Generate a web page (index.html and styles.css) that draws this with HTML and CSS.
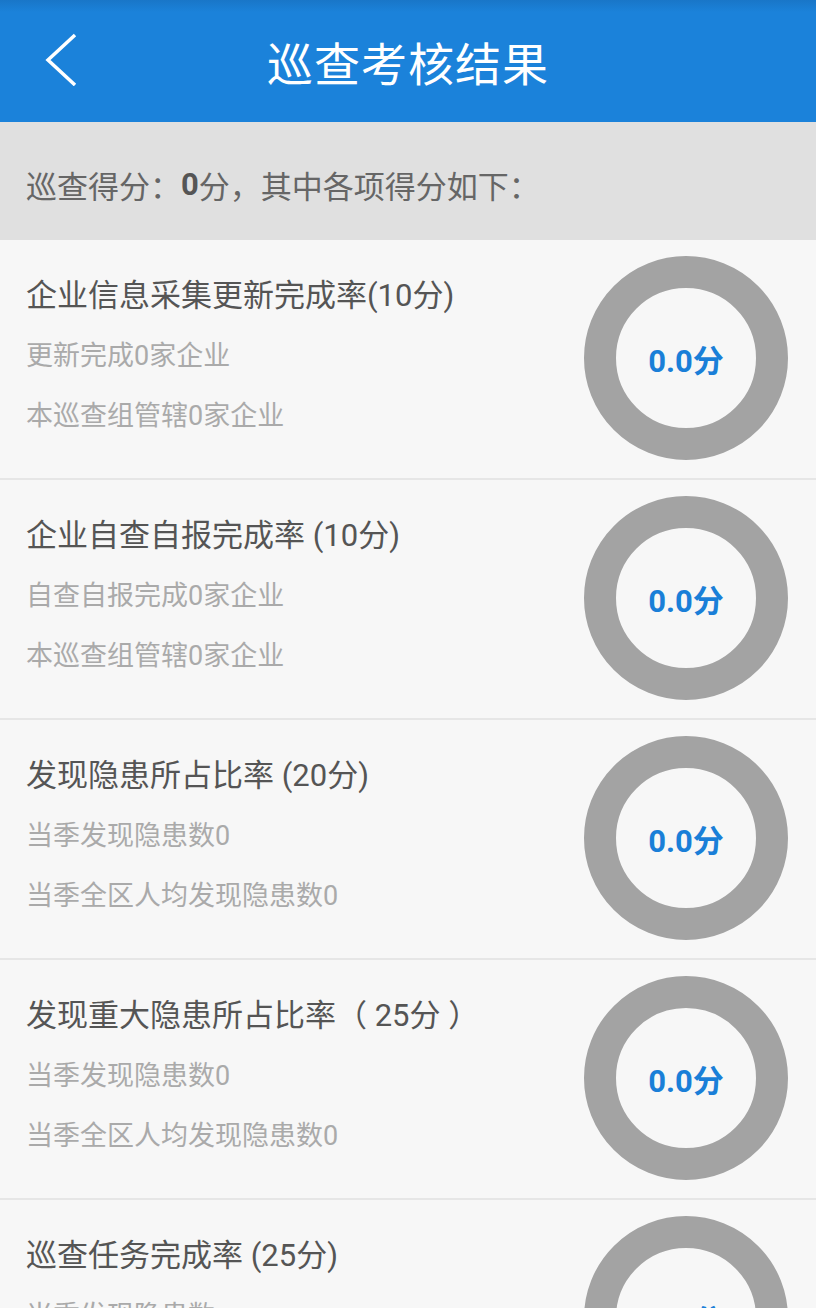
FILE: index.html
```html
<html>
  <head>
    <meta charset="utf-8" />
    <link rel="stylesheet" href="styles.css">
  </head>
  <body>
    <div class="header">
      <svg class="back" width="40" height="60" viewBox="0 0 40 60">
        <polyline points="30,9 3,34 30,59" fill="none" stroke="#fff" stroke-width="3.5" />
      </svg>
      <h1>巡查考核结果</h1>
    </div>

    <div class="summary">巡查得分：<b>0</b>分，其中各项得分如下：</div>

    <div class="row">
      <div class="info">
        <p class="title">企业信息采集更新完成率(10分)</p>
        <p class="sub">更新完成0家企业</p>
        <p class="sub">本巡查组管辖0家企业</p>
      </div>
      <div class="ring">0.0分</div>
    </div>

    <div class="row">
      <div class="info">
        <p class="title">企业自查自报完成率 (10分)</p>
        <p class="sub">自查自报完成0家企业</p>
        <p class="sub">本巡查组管辖0家企业</p>
      </div>
      <div class="ring">0.0分</div>
    </div>

    <div class="row">
      <div class="info">
        <p class="title">发现隐患所占比率 (20分)</p>
        <p class="sub">当季发现隐患数0</p>
        <p class="sub">当季全区人均发现隐患数0</p>
      </div>
      <div class="ring">0.0分</div>
    </div>

    <div class="row">
      <div class="info">
        <p class="title">发现重大隐患所占比率（ 25分 ）</p>
        <p class="sub">当季发现隐患数0</p>
        <p class="sub">当季全区人均发现隐患数0</p>
      </div>
      <div class="ring">0.0分</div>
    </div>

    <div class="row">
      <div class="info">
        <p class="title">巡查任务完成率 (25分)</p>
        <p class="sub">当季发现隐患数</p>
        <p class="sub">当季巡查任务数</p>
      </div>
      <div class="ring">0.0分</div>
    </div>
  </body>
</html>
```
FILE: styles.css
```css
body {
  margin: 0;
  background: #f7f7f7;
  font-family: Roboto, "Noto Sans CJK SC", sans-serif;
  overflow: hidden;
}

p {
  margin: 0;
}

.header {
  height: 122px;
  background: linear-gradient(#1976c8, #1b82da 12px);
  display: flex;
  align-items: center;
  justify-content: center;
  position: relative;
}

.header h1 {
  margin: 0;
  color: #fff;
  font-size: 46px;
  font-weight: normal;
  letter-spacing: 1px;
}

.back {
  position: absolute;
  left: 45px;
  top: 26px;
}

.summary {
  height: 118px;
  background: #e0e0e0;
  color: #666;
  font-size: 31px;
  padding-left: 26px;
  display: flex;
  align-items: center;
  padding-top: 6px;
  box-sizing: border-box;
}

.summary b {
  color: #555;
}

.row {
  height: 240px;
  box-sizing: border-box;
  border-bottom: 2px solid #e6e6e6;
  display: flex;
  align-items: center;
  justify-content: space-between;
  padding: 0 28px 2px 26px;
}

.info {
  display: flex;
  flex-direction: column;
  margin-top: -4px;
}

.title {
  color: #555;
  font-size: 31px;
  line-height: 60px;
}

.sub {
  color: #aaa;
  font-size: 27px;
  line-height: 60px;
}

.ring {
  width: 204px;
  height: 204px;
  box-sizing: border-box;
  border: 32px solid #a3a3a3;
  border-radius: 50%;
  display: flex;
  align-items: center;
  justify-content: center;
  color: #1a7fd8;
  font-size: 31px;
  font-weight: bold;
}
```
